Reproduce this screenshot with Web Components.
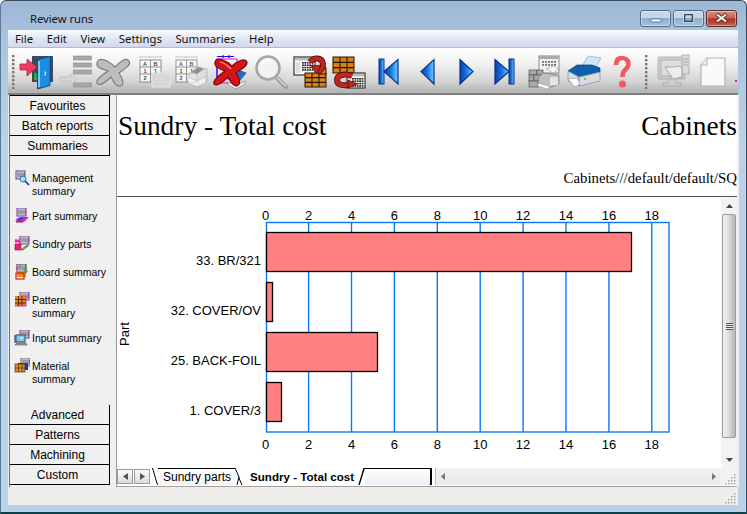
<!DOCTYPE html>
<html><head><meta charset="utf-8"><title>Review runs</title>
<style>
html,body{margin:0;padding:0;height:100%;overflow:hidden;background:#fff}
</style></head><body>
<app-window>
  <title-bar slot="title">Review runs</title-bar>
  <menu-bar slot="menu"></menu-bar>
  <tool-bar slot="tools"></tool-bar>
  <side-nav slot="side"></side-nav>
  <report-view slot="main"></report-view>
  <status-bar slot="status"></status-bar>
</app-window>
<script>
function def(name, css, html, init){
  customElements.define(name, class extends HTMLElement{
    constructor(){super();const r=this.attachShadow({mode:'open'});
      r.innerHTML='<style>'+css+'</style>'+(typeof html==='function'?html(this):html);
      if(init)init(r,this);}
  });
}
const SANS='"Liberation Sans",Arial,sans-serif', UI='"Noto Sans","Open Sans",sans-serif';

def('app-window',`
 :host{display:grid;width:747px;height:514px;box-sizing:border-box;position:relative;overflow:hidden;
  grid-template-rows:29px 18px 47px 392px 18px;
  padding:0 7px 7px;background:linear-gradient(#9db8d5 0,#abc4de 40px,#b9d1ea 140px,#b9d1ea 100%);
  border:1px solid #2b3f52;border-width:1px 1px 2px 1px;border-color:#39495a #39495a #0d3f48 #5c7a96;border-radius:6px 6px 0 0;margin:0}
 .client{display:grid;grid-template-columns:103px 1fr;min-height:0;background:#efefef;border-left:0}`,
 `<slot name="title"></slot><slot name="menu"></slot><slot name="tools"></slot>
  <div class="client"><slot name="side"></slot><slot name="main"></slot></div><slot name="status"></slot>`);

const capBtn=(k)=>({
 min:'<rect x="10" y="8" width="10" height="3" rx="1" fill="#fff" stroke="#4d6278" stroke-width=".8"/>',
 max:'<rect x="10.5" y="3.5" width="8" height="7" fill="none" stroke="#33465a" stroke-width="1.6"/><rect x="9.5" y="2.5" width="10" height="9" fill="none" stroke="#fff" stroke-width=".7" opacity=".8"/>',
 close:'<path d="M9.5 3l10 8M19.5 3l-10 8" stroke="#5a2a25" stroke-width="3.6"/><path d="M10 3.5l9 7M19 3.5l-9 7" stroke="#f4f4f4" stroke-width="2.2"/>'
})[k];
def('title-bar',`
 :host{display:flex;align-items:flex-start;margin:0 -7px;font:11.2px ${UI};color:#111;position:relative}
 .t{margin:9px 0 0 29px;line-height:17px}
 .b{margin-left:auto;margin-top:9px;margin-right:9px;display:flex;gap:2px}
 svg{display:block;width:31px;height:17px;border-radius:3px;box-sizing:border-box;border:1px solid #4f6b86;background:linear-gradient(#c5d6e8 0,#c5d6e8 45%,#8facc8 50%,#a9c2dc 100%);box-shadow:inset 0 0 0 1px rgba(255,255,255,.4)}
 svg.c{border-color:#5a2a25;background:linear-gradient(#d98f84 0,#c9604f 48%,#a8321f 52%,#c4604c 100%)}`,
 `<div class="t"><slot></slot></div><div class="b">
  <svg viewBox="0 0 29 15">${capBtn('min')}</svg><svg viewBox="0 0 29 15">${capBtn('max')}</svg><svg class="c" viewBox="0 0 29 15">${capBtn('close')}</svg></div>`);

def('menu-bar',`
 :host{display:flex;align-items:center;box-sizing:border-box;font:11.3px ${UI};color:#111;margin-right:1px;
  background:linear-gradient(#fbfcfe,#dfe4f2 55%,#d4daec);border-bottom:1px solid #b4bace;padding-left:7px;gap:13.6px;height:18px}
 span{line-height:16px}`,
 ['File','Edit','View','Settings','Summaries','Help'].map(m=>`<span>${m}</span>`).join(''));

/* toolbar icons: 39x38 local coordinates */
const wnd=(x,y,w,h)=>{let s=`<rect x="${x}" y="${y}" width="${w}" height="${h}" fill="#fff" stroke="#333" stroke-width="1.2"/><rect x="${x+1}" y="${y+1}" width="${w-2}" height="2.5" fill="#b9bcc4"/>`;
  for(let r=0;r<4;r++)for(let c=0;c<5;c++)s+=`<rect x="${x+w-13+c*2.4}" y="${y+5+r*2.4}" width="1.8" height="1.6" fill="#222"/>`;
  s+=`<rect x="${x+1.5}" y="${y+5}" width="${w-16}" height="${h-7}" fill="#d9dde4"/>`;return s;};
const brick=(x,y,w,h)=>{let s=`<rect x="${x}" y="${y}" width="${w}" height="${h}" fill="#d8811c" stroke="#241505" stroke-width="1"/>`;
  for(let i=1;i<3;i++)s+=`<path d="M${x} ${y+h*i/3}H${x+w}M${x+w*i/3} ${y}V${y+h}" stroke="#241505" stroke-width="1.1"/>`;return s;};
const cell=(x,y,t)=>`<text x="${x}" y="${y}" font-family="Liberation Sans" font-size="5.5" font-weight="bold" fill="#222" text-anchor="middle">${t}</text>`;
const grid=(x,y,op)=>`<g opacity="${op}"><rect x="${x}" y="${y}" width="21" height="22" fill="#fff" stroke="#777"/><path d="M${x} ${y+7}H${x+21}M${x} ${y+14}H${x+21}M${x+10.5} ${y}V${y+22}" stroke="#777"/><path d="M${x} ${y-2}V${y-4}M${x+10} ${y-2}V${y-4}M${x+21} ${y-2}V${y-4}M${x} ${y-3}H${x+21}" stroke="#bbb"/>${cell(x+5,y+6,'A')}${cell(x+15.5,y+6,'B')}${cell(x+5,y+13,'1')}${cell(x+15.5,y+13,'1')}${cell(x+5,y+20,'2')}</g>`;
const nav=(pts,bar)=>`<defs><linearGradient id="bl" x1="0" y1="0" x2="1" y2="0"><stop offset="0" stop-color="#0a3fa8"/><stop offset=".5" stop-color="#1978e0"/><stop offset="1" stop-color="#6fd0fb"/></linearGradient></defs>`+(bar||'')+`<path d="${pts}" fill="url(#bl)" stroke="#08308c" stroke-width="1.2"/>`;
const arc=(d)=>`<path d="${d}" fill="none" stroke="#5e0f0c" stroke-width="6"/><path d="${d}" fill="none" stroke="#c0251e" stroke-width="4.2"/>`;
const ICON={
 door:`<path d="M15 3H36V29H15z" fill="#3d4a57"/><rect x="17" y="20" width="3.5" height="7" fill="#2aa845"/><path d="M20.5 7L33 3.2V32.5L20.5 36z" fill="#1e8ee0" stroke="#0d4f94"/><path d="M22 8v26" stroke="#7cc8f5" stroke-width="2"/><path d="M27 19h1.5v3H27" stroke="#fff" fill="none" stroke-width=".8"/><path d="M3 11h7V6l10 8-10 9v-6H3z" fill="#ef3b5f" stroke="#b81e3f" stroke-width=".8"/>`,
 list:`<g fill="#a8a8a8" stroke="#8b8b8b" stroke-width=".6"><rect x="17.5" y="3" width="18" height="4"/><rect x="17.5" y="10" width="18" height="4"/><rect x="17.5" y="17" width="18" height="4"/><rect x="17.5" y="30" width="18" height="4"/></g><path d="M4 24h11v-3l7 5-7 5v-3H4z" fill="#d6d6d6" stroke="#bbb" stroke-width=".6"/>`,
 xgrey:`<path d="M2 10C3 3 13 7 20 14 26 8 31 4 34 8 37 12 29 16 24 20 28 26 30 32 25 33 20 34 18 27 16 24 11 29 4 34 2 30 0 26 9 21 13 18 8 16 1 15 2 10Z" fill="#bdbdbd" stroke="#7e7e7e" stroke-width="1.2"/>`,
 tbl:grid(6,7,.8)+`<rect x="18" y="20" width="18" height="14" fill="#d7d7d7" stroke="#e6e6e6"/>`,
 tblp:grid(3,7,.75)+`<g opacity=".75"><path d="M16 21l7-7 11 2v12l-8 5-10-4z" fill="#ddd" stroke="#999" stroke-width=".6"/><path d="M15 24l9 4 9-5v7l-9 4-9-4z" fill="#f8f8f8" stroke="#999" stroke-width=".6"/><path d="M18 19l8-5 5 2-7 5z" fill="#777"/></g>`,
 xred:`<rect x="5" y="6" width="20" height="24" fill="none" stroke="#ff00c8" stroke-width="1"/><path d="M5 3.5H22M5 6V30M11 2v3M17 2v3" stroke="#1412e8" stroke-width="1.2" fill="none"/><path d="M14 25l10-9 10 4-9 11z" fill="#1f6fd0" stroke="#333" stroke-width=".6"/><path d="M16 29l8 4 9-5 0 3-9 5-8-4z" fill="#f3f3f3" stroke="#777" stroke-width=".6"/><path d="M3 9C4 3 14 7 20 13 26 7 33 5 35 9 36 13 29 16 24 20 28 25 29 31 25 33 21 34 18 27 16 24 11 29 5 34 2 31 0 27 9 21 13 18 8 16 2 14 3 9Z" fill="#d4141a" stroke="#7a0a0a" stroke-width="1.2"/><path d="M8 9c4 0 8 4 11 7" stroke="#f5989a" stroke-width="1.2" fill="none"/>`,
 mag:`<path d="M25 24l10 10" stroke="#9c9c9c" stroke-width="4.5" stroke-linecap="round"/><path d="M25.5 24l9.5 9.5" stroke="#d9d9d9" stroke-width="1.6"/><circle cx="17" cy="15" r="11.5" fill="#f2f2f2" stroke="#a6a6a6" stroke-width="2.6"/><path d="M10 12c2-4 6-6 10-5" stroke="#fff" stroke-width="2" fill="none"/>`,
 gr1:wnd(4,4,21,18)+brick(15,20,21,14)+`<rect x="29" y="15" width="7" height="6" fill="#d8811c" stroke="#241505"/>`+arc('M20 9C24 4 32 4 33 11 33.500 15 31 17 28 19')+`<path d="M21 13l10-1-4 9z" fill="#c0251e" stroke="#5e0f0c" stroke-width=".8"/>`,
 gr2:brick(4,4,21,16)+wnd(18,20,18,15)+arc('M23 23C15 20 8 22 8 27 8 32 14 33 20 32')+`<path d="M19 27l9 4-9 4z" fill="#c0251e" stroke="#5e0f0c" stroke-width=".8"/>`,
 first:nav('M30 6.5V31L16 18.5Z','<rect x="11" y="6" width="5" height="25" fill="url(#bl)" stroke="#08308c"/>'),
 prev:nav('M27 6.5V31L14 18.5Z'),
 next:nav('M14 6.5V31L27 18.5Z'),
 last:nav('M10 6.5V31L24 18.5Z','<rect x="24" y="6" width="5" height="25" fill="url(#bl)" stroke="#08308c"/>'),
 wall:`<rect x="15" y="3" width="20" height="17" fill="#f2f2f2" stroke="#888"/><rect x="15" y="3" width="20" height="3" fill="#aaa"/><g fill="#777">${[0,1,2,3,4].map(c=>[0,1].map(r=>`<rect x="${18+c*3}" y="${8+r*3}" width="2" height="1.8"/>`).join('')).join('')}</g><g fill="#a8a8a8" stroke="#555" stroke-width=".7"><rect x="5" y="17" width="8" height="5"/><rect x="13" y="17" width="6" height="5"/><rect x="5" y="22" width="5" height="6"/><rect x="10" y="22" width="8" height="6"/><rect x="5" y="28" width="9" height="6"/></g><path d="M14 25l5-5 16 2v9l-10 4-10-3z" fill="#bfbfbf" stroke="#777" stroke-width=".7"/><path d="M14 30l10 3 2 2-3 1-9-3z" fill="#fff" stroke="#999" stroke-width=".6"/><path d="M22 16l7-3 6 3-6 4z" fill="#f5f5f5" stroke="#999" stroke-width=".6"/><rect x="26" y="24" width="8" height="8" fill="#e4e4e4"/>`,
 printer:`<path d="M18 15l7-12 13 2-7 12z" fill="#cfe6f8" stroke="#8fb5d0" stroke-width=".8"/><path d="M5 18l9-6h15l8 3v4L16 24z" fill="#0e5fae" stroke="#0a3f78" stroke-width=".7"/><path d="M5 18l11 6 21-5v9l-21 5-11-5z" fill="#d7dde2" stroke="#7a8a98" stroke-width=".7"/><path d="M16 24v9" stroke="#7a8a98"/><circle cx="22" cy="26" r="1" fill="#22d04a"/><path d="M5 26l9-1 3 6-5 3z" fill="#fff" stroke="#99a" stroke-width=".7"/>`,
 help:`<path d="M14 12c0-5 2.500-7 6-7 4.500 0 6.500 3 6.500 6 0 4-3 5-5 8-1 2-1 3-1 5" fill="none" stroke="#f2595f" stroke-width="4.6"/><circle cx="20.500" cy="31" r="3.6" fill="#f2595f"/>`,
 mon:`<g opacity=".85"><rect x="3" y="4" width="27" height="22" rx="1" fill="#c8c8c8" stroke="#aaa"/><rect x="6" y="7" width="21" height="16" fill="#dcdcdc" stroke="#a8a8a8"/><rect x="27" y="2" width="7" height="19" fill="#d8d8d8" stroke="#aaa"/><path d="M28 6h5M28 9h5M28 12h5" stroke="#999"/><path d="M10 14h8l6-1 3 2v9l-9 2-4-6z" fill="#efefef" stroke="#999"/><path d="M13 26h8v4h5v3H8v-3h5z" fill="#cfcfcf" stroke="#aaa"/></g>`,
 page:`<path d="M13 5H31V33H7V12z" fill="#fafafa" stroke="#b4b4b4" stroke-width="1.2"/><path d="M13 5V12H7" fill="#ededed" stroke="#b4b4b4"/>`,
 cut:`<rect x="2" y="27" width="2" height="2" fill="#c020c0"/>`
};
def('tool-icon',`:host{display:block;flex:none;width:39px;height:38px} svg{display:block;width:39px;height:38px;overflow:visible}`,
 h=>`<svg viewBox="0 0 39 38">${ICON[h.getAttribute('name')]||''}</svg>`);
const dots=`<svg width="3" height="34" style="display:block"><g fill="#777">${[...Array(9)].map((_,i)=>`<rect x="0" y="${i*4}" width="2.4" height="2.4"/>`).join('')}</g></svg>`;
def('tool-grip',`:host{display:block;flex:none} .g{margin-top:2px}`,`<div class="g">${dots}</div>`);
def('tool-bar',`
 :host{display:flex;align-items:flex-start;box-sizing:border-box;height:47px;padding:5px 0 0 4px;overflow:hidden;margin-right:1px;
  background:linear-gradient(#fff 0,#f4f4f4 30%,#d4d4d4 75%,#b7b7b7 95%);border-bottom:2px solid #7e7e7e}
 tool-grip.a{margin-right:2px} tool-grip.b{margin:0 7px 0 4px}`,
 `<tool-grip class="a"></tool-grip>`+['door','list','xgrey','tbl','tblp','xred','mag','gr1','gr2','first','prev','next','last','wall','printer','help'].map(n=>`<tool-icon name="${n}"></tool-icon>`).join('')+
 `<tool-grip class="b"></tool-grip>`+['mon','page','cut'].map(n=>`<tool-icon name="${n}"></tool-icon>`).join(''));

/* sidebar */
const s16=(body)=>`<svg viewBox="0 0 16 16" width="16" height="16" style="display:block">${body}</svg>`;
const miniw=(x,y,c)=>`<rect x="${x}" y="${y}" width="9" height="8" fill="#dfe3ea" stroke="${c}" stroke-width="1"/><path d="M${x+2} ${y+1.5}v5M${x+4} ${y+1.5}v5M${x+6} ${y+1.5}v5M${x+8} ${y+1.5}v5" stroke="#333" stroke-width=".8"/>`;
const SI={
 mg:miniw(2,1,'#6a3a9a')+`<circle cx="9" cy="9" r="3" fill="#a8e0f0" stroke="#2c70a0"/><path d="M11 11l4 4" stroke="#1a2aa0" stroke-width="1.6"/>`,
 pa:miniw(3,0,'#7a2aa8')+`<path d="M1 13l6-4h8l-5 5H3z" fill="#e020c0"/><path d="M2 11l5-2 3 1-5 3z" fill="#3040d8"/><path d="M2 14h7" stroke="#902020"/>`,
 su:miniw(6,0,'#7a2aa8')+`<path d="M2 3v4M5 3v4M1 5h5" stroke="#e8207a" stroke-width="1.4"/><rect x="1" y="8" width="6" height="6" fill="#e8207a" stroke="#901040" stroke-width=".6"/><path d="M7 13l7-5 1 2-7 5z" fill="#5f9a3a"/>`,
 bo:miniw(3,0,'#334')+`<path d="M2 3l1 2M6 1v2" stroke="#c02090"/><path d="M3 7h8l1 6H3z" fill="#e8901c"/><rect x="2" y="9" width="8" height="6" fill="none" stroke="#e81010" stroke-width="1.2"/><path d="M10 5l4 2-3 4z" fill="#30b040"/>`,
 pt:miniw(6,0,'#7a2aa8')+`<rect x="1" y="4" width="11" height="10" fill="#e8881c"/><path d="M1 7.5h11M1 11h11M4.5 4v10M8 4v10" stroke="#4a2808"/><path d="M1 14h11" stroke="#e020c0"/><path d="M12 4v10" stroke="#c020c0"/>`,
 in:miniw(6,0,'#7a2aa8')+`<rect x="2" y="5" width="9" height="7" fill="#7cc8ee" stroke="#444"/><path d="M3 13l9 0 1 2H1z" fill="#9aa" stroke="#333" stroke-width=".5"/><path d="M6 8h3" stroke="#fff"/><path d="M1 5v8" stroke="#226"/>`,
 ma:miniw(7,0,'#667')+`<path d="M4 5h10v7H4z" fill="#1a32d0"/><rect x="1" y="6" width="10" height="8" fill="#e8901c" stroke="#222" stroke-width=".6"/><path d="M1 10h10M4.5 6v8M8 6v8" stroke="#5a3410" stroke-width=".8"/>`
};
def('nav-btn',`:host{display:flex;align-items:center;justify-content:center;box-sizing:border-box;height:20px;width:100px;padding-right:4px;font:12px ${SANS};color:#000;background:#f0f0f0;border-right:1px solid #000;border-bottom:1px solid #000}`,`<slot></slot>`);
def('nav-item',`:host{display:grid;grid-template-columns:16px 1fr;column-gap:2px;box-sizing:border-box;min-height:28px;padding-bottom:12px;font:10.5px/13px ${SANS};color:#000;white-space:nowrap}
 .ic{margin-top:-1.5px}`,h=>`<div class="ic">${s16(SI[h.getAttribute('icon')])}</div><div><slot></slot></div>`);
def('side-nav',`
 :host{display:flex;flex-direction:column;background:#f0f0f0;border-left:1px solid #6e6e6e;margin-left:1px;box-sizing:border-box;width:102px;height:392px;font:12px ${SANS}}
 .top{border-top:1px solid #000;width:100px}
 .items{flex:1;padding:15.5px 0 0 4px}
 .bot{margin-bottom:2px}`,
 `<div class="top"><nav-btn>Favourites</nav-btn><nav-btn>Batch reports</nav-btn><nav-btn>Summaries</nav-btn></div>
  <div class="items">
   <nav-item icon="mg">Management<br>summary</nav-item><nav-item icon="pa">Part summary</nav-item><nav-item icon="su">Sundry parts</nav-item>
   <nav-item icon="bo">Board summary</nav-item><nav-item icon="pt">Pattern<br>summary</nav-item><nav-item icon="in">Input summary</nav-item><nav-item icon="ma">Material<br>summary</nav-item>
  </div>
  <div class="bot"><nav-btn>Advanced</nav-btn><nav-btn>Patterns</nav-btn><nav-btn>Machining</nav-btn><nav-btn>Custom</nav-btn></div>`);

/* chart drawn on its own canvas, coordinates equal window pixels */
const xs=[0,2,4,6,8,10,12,14,16,18];
const X=v=>265.7+21.45*v;
def('bar-chart',`:host{display:block;min-width:0;min-height:0;background:#fff;overflow:hidden} svg{display:block}
 text{font:13px ${SANS};fill:#000}`,
 `<svg width="604" height="271" viewBox="117 197 604 271">
  <rect x="266.5" y="222.5" width="402.5" height="209.5" fill="none" stroke="#0a78f5" stroke-width="1.4"/>
  ${xs.slice(1).map(v=>`<path d="M${X(v)} 222V432" stroke="#0a78f5" stroke-width="1.4"/>`).join('')}
  ${xs.map(v=>`<text x="${X(v)}" y="220" text-anchor="middle">${v}</text><text x="${X(v)}" y="449" text-anchor="middle">${v}</text>`).join('')}
  ${[[232,631.5,'33. BR/321',260],[282,272.5,'32. COVER/OV',310],[332,377.5,'25. BACK-FOIL',360],[382,281.5,'1. COVER/3',410]].map(([y,r,l,c])=>
    `<rect x="266.5" y="${y+.5}" width="${r-266.5}" height="39" fill="#ff8080" stroke="#000" stroke-width="1.3"/><text x="261" y="${c+4.5}" text-anchor="end">${l}</text>`).join('')}
  <text transform="translate(129 334) rotate(-90)" text-anchor="middle">Part</text>
 </svg>`);

def('scroll-v',`:host{display:flex;flex-direction:column;align-items:stretch;width:16px;height:271px;background:#f3f3f3;box-sizing:border-box}
 .a{height:17px;flex:none;display:flex;align-items:center;justify-content:center}
 .d{height:30px;align-items:flex-end;padding-bottom:6px;box-sizing:border-box}
 .th{flex:1;border:1px solid #9a9a9a;border-radius:2px;background:linear-gradient(90deg,#f0f0f0,#e0e0e0 45%,#bcbcbc 90%);display:flex;align-items:center;justify-content:center;margin:0 1px}
 .g{width:7px;height:7px;background:repeating-linear-gradient(#555 0 1px,#e8e8e8 1px 2px)}`,
 `<div class="a"><svg width="7" height="4"><path d="M0 4L3.5 0 7 4z" fill="#444"/></svg></div><div class="th"><div class="g"></div></div><div class="a d"><svg width="7" height="4"><path d="M0 0L3.5 4 7 0z" fill="#444"/></svg></div>`);

const grip=`<svg width="12" height="12" style="display:block"><g fill="#9c9c9c">${[[9,1],[6,4],[9,4],[3,7],[6,7],[9,7],[0,10],[3,10],[6,10],[9,10]].map(([x,y])=>`<rect x="${x}" y="${y}" width="1.4" height="1.4"/>`).join('')}</g></svg>`;
def('tab-strip',`
 :host{display:flex;align-items:flex-start;height:19px;box-sizing:border-box;background:#fff;font:12px ${SANS};color:#000;border-bottom:1px solid #a0a0a0;overflow:hidden}
 .sb{width:16px;height:15px;margin-top:1px;margin-right:1px;border:1px solid #9a9a9a;box-sizing:border-box;background:linear-gradient(#fafafa,#dcdcdc);display:flex;align-items:center;justify-content:center}
 .tab{display:flex;align-items:center;height:17px;box-sizing:border-box;border-top:1px solid #000;white-space:nowrap;background:#fff}
 .t1{padding:0 4px 0 5px;background:linear-gradient(#fff,#f4f4f4)}
 .t2{padding:0 4px 0 7px;font-weight:bold;font-size:11.6px;border-top:0}
 svg.sl{flex:none;display:block}
 .blank{width:67px;height:17px;box-sizing:border-box;border-top:1px solid #000;border-right:2px solid #000;background:linear-gradient(#fff,#eceef2)}
 .gap{width:3px;height:17px}
 .hs{flex:1;height:17px;background:linear-gradient(#f2f2f2,#e9e9e9);display:flex;align-items:center;justify-content:space-between;padding:0 5px;box-sizing:border-box;border-left:1px solid #bbb}
 .cn{width:16px;height:17px;background:#f2f2f2;display:flex;align-items:flex-end;justify-content:flex-end}`,
 `<div class="sb"><svg width="5" height="7"><path d="M5 0L0 3.5 5 7z" fill="#555"/></svg></div>
  <div class="sb"><svg width="5" height="7"><path d="M0 0L5 3.5 0 7z" fill="#555"/></svg></div>
  <svg class="sl" width="6" height="17" style="margin-left:1px"><path d="M.5 0L5.5 17" stroke="#000" fill="none"/></svg>
  <div class="tab t1">Sundry parts</div>
  <svg class="sl" width="8" height="17"><path d="M2 17L4 9 0 0M3.5 9L7 17" stroke="#000" fill="none" stroke-width="1"/></svg>
  <div class="tab t2">Sundry - Total cost</div>
  <svg class="sl" width="7" height="17"><path d="M1 17L6 .5H7" stroke="#000" fill="none" stroke-width="1.4"/></svg>
  <div class="blank"></div><div class="gap"></div>
  <div class="hs"><svg width="4" height="7"><path d="M4 0L0 3.5 4 7z" fill="#777"/></svg><svg width="4" height="7"><path d="M0 0L4 3.5 0 7z" fill="#777"/></svg></div>
  <div class="cn">${grip}</div>`);

def('report-view',`
 :host{display:grid;grid-template-rows:102px 271px 19px;margin-left:5px;margin-right:2px;border-left:1px solid #9a9a9a;background:#fff;min-width:0;min-height:0;box-sizing:border-box}
 header{display:flex;flex-direction:column;font-family:"Liberation Serif","Times New Roman",serif;color:#000;border-bottom:1px solid #555;padding:0 0 0 1px;box-sizing:border-box}
 .row{display:flex;justify-content:space-between;font-size:27.4px;line-height:32px;margin-top:15px}
 .sub{margin-top:auto;text-align:right;font-size:14.8px;line-height:17px;margin-bottom:9px}
 .mid{display:grid;grid-template-columns:1fr 16px;min-height:0}`,
 `<header><div class="row"><span>Sundry - Total cost</span><span>Cabinets</span></div><div class="sub">Cabinets///default/default/SQ</div></header>
  <div class="mid"><bar-chart></bar-chart><scroll-v></scroll-v></div>
  <tab-strip></tab-strip>`);

def('status-bar',`:host{display:flex;justify-content:flex-end;align-items:flex-end;background:#f0edeb;margin-right:1px;box-sizing:border-box;height:18px;padding:0 1px 1px 0}`,grip);
</script>
</body></html>
